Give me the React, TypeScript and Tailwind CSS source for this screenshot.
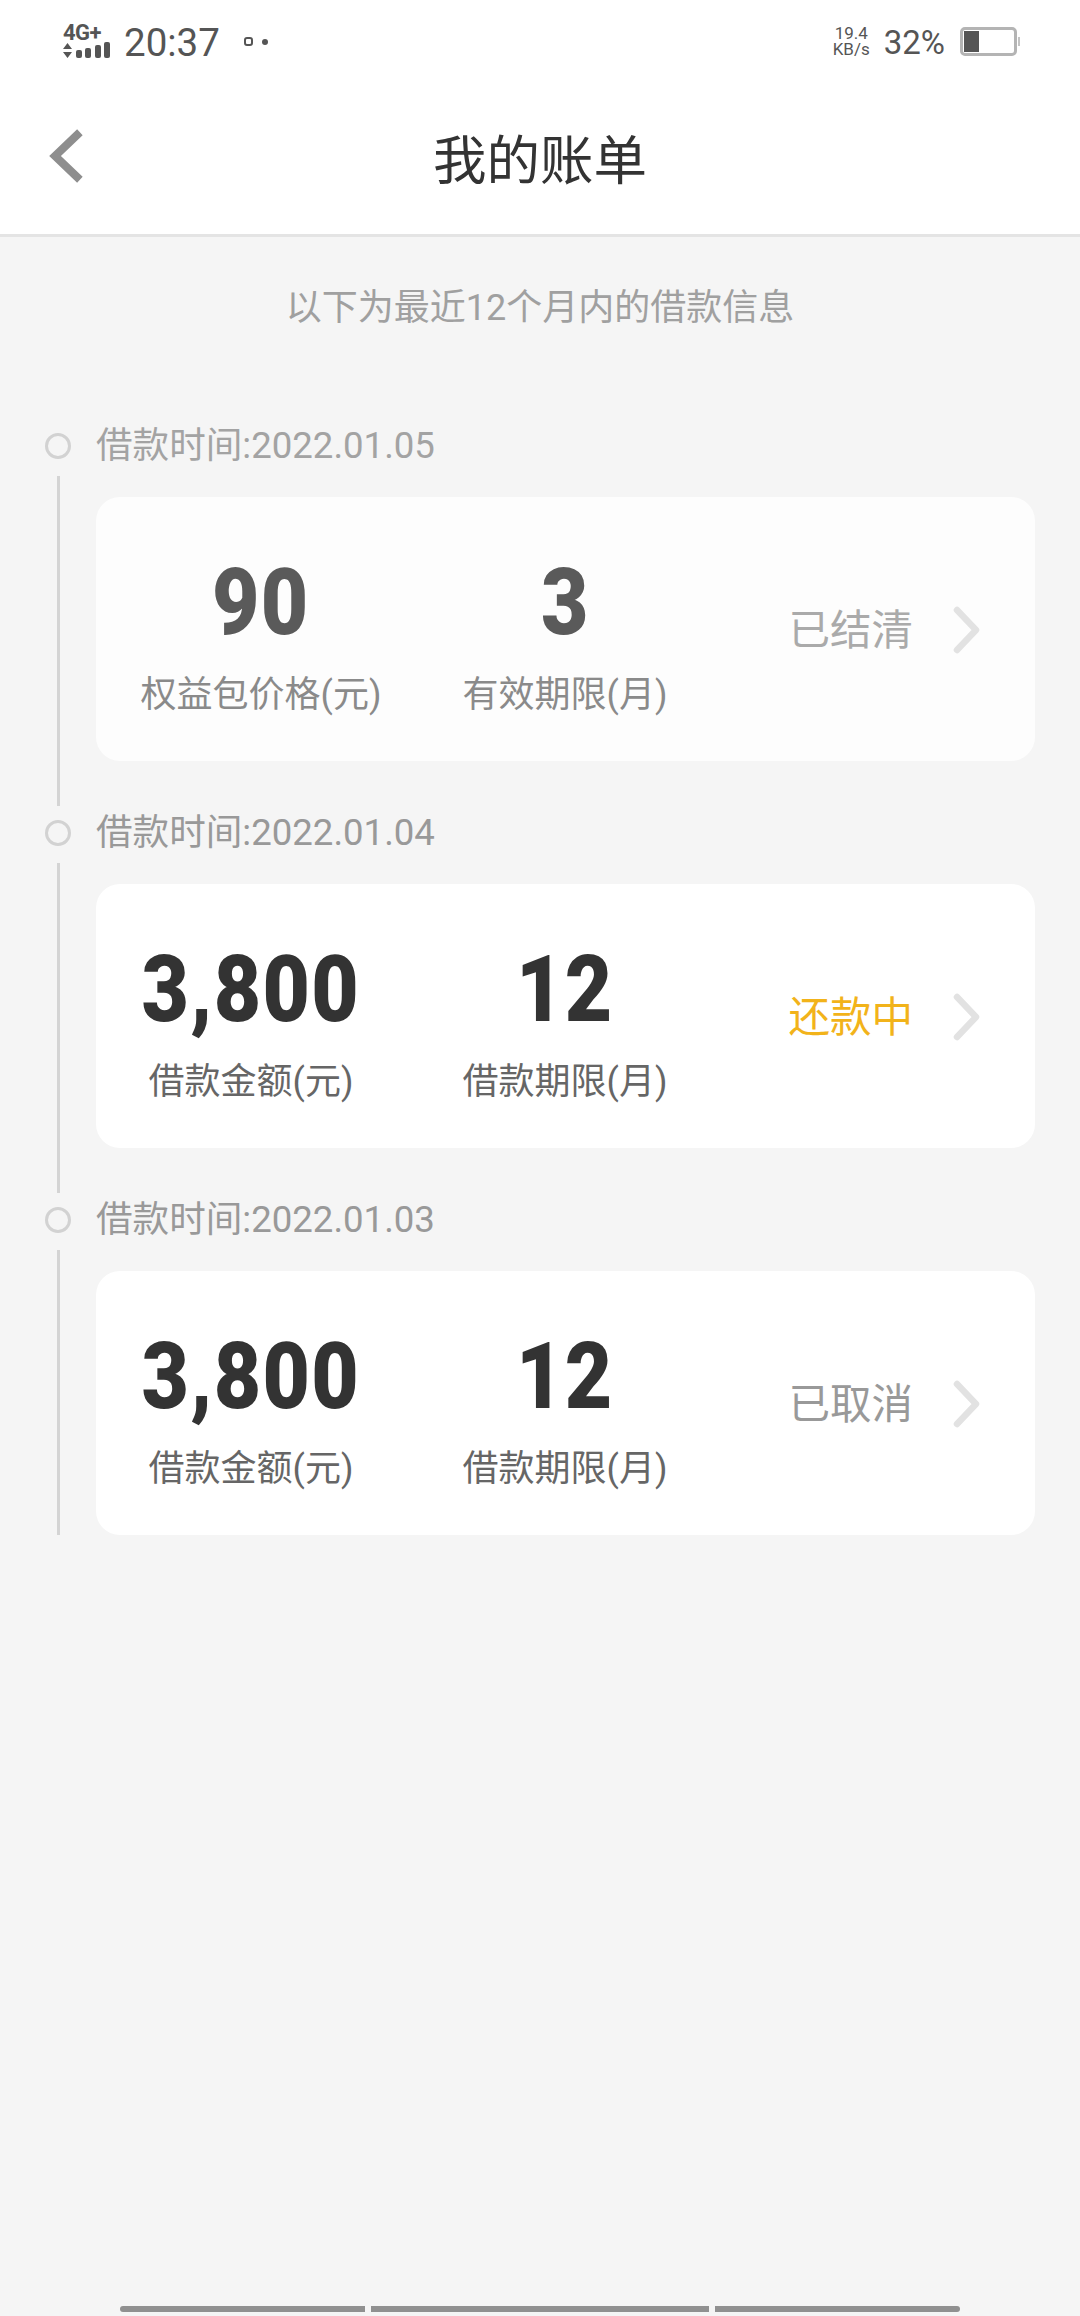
import React from "react";

const FONT = "[font-family:Roboto,'Noto_Sans_CJK_SC',sans-serif]";

function Big({ children, faded }: { children: React.ReactNode; faded?: boolean }) {
  return (
    <div
      className={`h-[92px] flex items-center justify-center whitespace-nowrap text-[92px] leading-[92px] font-black tracking-[1.5px] scale-x-[0.89] ${
        faded ? "text-[#5a5a5a]" : "text-[#333333]"
      }`}
    >
      {children}
    </div>
  );
}

function Chevron() {
  return (
    <svg width="28" height="48" viewBox="0 0 28 48" fill="none" className="block">
      <path d="M4 4 L23 24 L4 44" stroke="#e2e2e2" strokeWidth="6.5" strokeLinecap="round" strokeLinejoin="round" />
    </svg>
  );
}

type Item = {
  date: string;
  a: string;
  aLabel: string;
  b: string;
  bLabel: string;
  status: string;
  statusClass: string;
  faded?: boolean;
  last?: boolean;
};

const items: Item[] = [
  { date: "2022.01.05", a: "90", aLabel: "权益包价格(元)", b: "3", bLabel: "有效期限(月)", status: "已结清", statusClass: "text-[#aaaaaa]", faded: true },
  { date: "2022.01.04", a: "3,800", aLabel: "借款金额(元)", b: "12", bLabel: "借款期限(月)", status: "还款中", statusClass: "text-[#f2b31a]" },
  { date: "2022.01.03", a: "3,800", aLabel: "借款金额(元)", b: "12", bLabel: "借款期限(月)", status: "已取消", statusClass: "text-[#999999]", last: true },
];

function Row({ item }: { item: Item }) {
  return (
    <div className="flex">
      <div className="w-[96px] shrink-0 flex flex-col pl-[45px]">
        <div className="mt-[14px] w-[26px] h-[26px] rounded-full border-[3px] border-[#d2d2d2]" />
        <div className="mt-[17px] ml-[11.5px] w-[3px] flex-1 bg-[#d4d4d4]" />
      </div>
      <div className={`w-[939px] ${item.last ? "" : "pb-[45px]"}`}>
        <div className={`h-[52px] pt-[2px] flex items-center text-[36.6px] ${item.faded ? "text-[#a3a3a3]" : "text-[#999999]"}`}>
          借款时间:{item.date}
        </div>
        <div className={`mt-[26px] h-[264px] rounded-[24px] flex items-start ${item.faded ? "bg-[#fdfdfd]" : "bg-white"}`}>
          <div className={`mt-[60px] w-[260px] ${item.faded ? "ml-[35px]" : "ml-[25px]"} shrink-0 flex flex-col items-center`}>
            <Big faded={item.faded}>{item.a}</Big>
            <div className={`mt-[21px] text-[36px] leading-[50px] whitespace-nowrap ${item.faded ? "text-[#8a8a8a]" : "text-[#666666]"}`}>
              {item.aLabel}
            </div>
          </div>
          <div className={`mt-[60px] w-[260px] ${item.faded ? "ml-[44px]" : "ml-[54px]"} shrink-0 flex flex-col items-center`}>
            <Big faded={item.faded}>{item.b}</Big>
            <div className={`mt-[21px] text-[36px] leading-[50px] whitespace-nowrap ${item.faded ? "text-[#8a8a8a]" : "text-[#666666]"}`}>
              {item.bLabel}
            </div>
          </div>
          <div className="ml-auto mr-[54px] h-full flex items-center gap-[40px] pt-[1px]">
            <span className={`mt-[3px] text-[41.5px] whitespace-nowrap ${item.statusClass}`}>{item.status}</span>
            <Chevron />
          </div>
        </div>
      </div>
    </div>
  );
}

function StatusBar() {
  return (
    <div className="h-[84px] flex items-start justify-between pl-[63px] pr-[60px] text-[#555555]">
      <div className="flex items-start">
        <div className="mt-[24px] w-[47px] flex flex-col">
          <div className="h-[18px] text-[22px] leading-[18px] font-bold tracking-[-0.5px] whitespace-nowrap">4G+</div>
          <div className="mt-[1px] flex items-end gap-[3.5px] h-[15px]">
            <svg width="9" height="15" viewBox="0 0 9 15" className="block">
              <path d="M4.5 0 L9 6 L0 6 Z M0 9 L9 9 L4.5 15 Z" fill="#555555" />
            </svg>
            <div className="w-[6px] h-[8px] rounded-[2px] bg-[#555555]" />
            <div className="w-[6px] h-[10px] rounded-[2px] bg-[#555555]" />
            <div className="w-[6px] h-[13px] rounded-[2px] bg-[#555555]" />
            <div className="w-[6px] h-[16px] rounded-[2px] bg-[#555555]" />
          </div>
        </div>
        <div className="ml-[14px] mt-[20px] text-[38.5px] leading-[46px]">20:37</div>
        <div className="ml-[24px] mt-[37px] w-[9px] h-[9px] rounded-[3px] border-2 border-[#555555]" />
        <div className="ml-[9px] mt-[39px] w-[6px] h-[6px] rounded-full bg-[#555555]" />
      </div>
      <div className="flex items-start">
        <div className="mt-[25px] flex flex-col items-center text-[17px] leading-[16px]">
          <div>19.4</div>
          <div>KB/s</div>
        </div>
        <div className="ml-[14px] mt-[21px] text-[33px] leading-[44px]">32%</div>
        <div className="ml-[15px] mt-[27px] flex items-center">
          <div className="w-[57px] h-[29px] rounded-[5px] border-[3px] border-[#b4b4b4] p-[1px]">
            <div className="w-[15px] h-full bg-[#555555]" />
          </div>
          <div className="ml-[1px] w-[2px] h-[9px] bg-[#c4c4c4]" />
        </div>
      </div>
    </div>
  );
}

export default function App() {
  return (
    <div className={`w-[1080px] h-[2316px] bg-[#f5f5f5] flex flex-col ${FONT}`}>
      <div className="bg-white h-[234px] shrink-0">
        <StatusBar />
        <div className="h-[150px] relative flex items-center justify-center">
          <svg width="36" height="54" viewBox="0 0 36 54" fill="none" className="absolute left-[47px] top-[45px]">
            <path d="M30 6 L8 27 L30 48" stroke="#8e8e8e" strokeWidth="8" strokeLinecap="square" />
          </svg>
          <div className="mt-[6px] text-[53.5px] leading-[60px] text-[#333333]">我的账单</div>
        </div>
      </div>
      <div className="h-[3px] bg-[#e4e4e4] shrink-0" />
      <div className="mt-[45px] h-[52px] flex items-center justify-center text-[36px] text-[#a0a0a0]">
        以下为最近12个月内的借款信息
      </div>
      <div className="mt-[85px] flex flex-col">
        {items.map((it) => (
          <Row key={it.date} item={it} />
        ))}
      </div>
      <div className="mt-auto mb-[4px] ml-[120px] flex gap-[6px] h-[6px]">
        <div className="w-[245px] rounded-l-full bg-[#909090]" />
        <div className="w-[338px] bg-[#909090]" />
        <div className="w-[245px] rounded-r-full bg-[#909090]" />
      </div>
    </div>
  );
}
